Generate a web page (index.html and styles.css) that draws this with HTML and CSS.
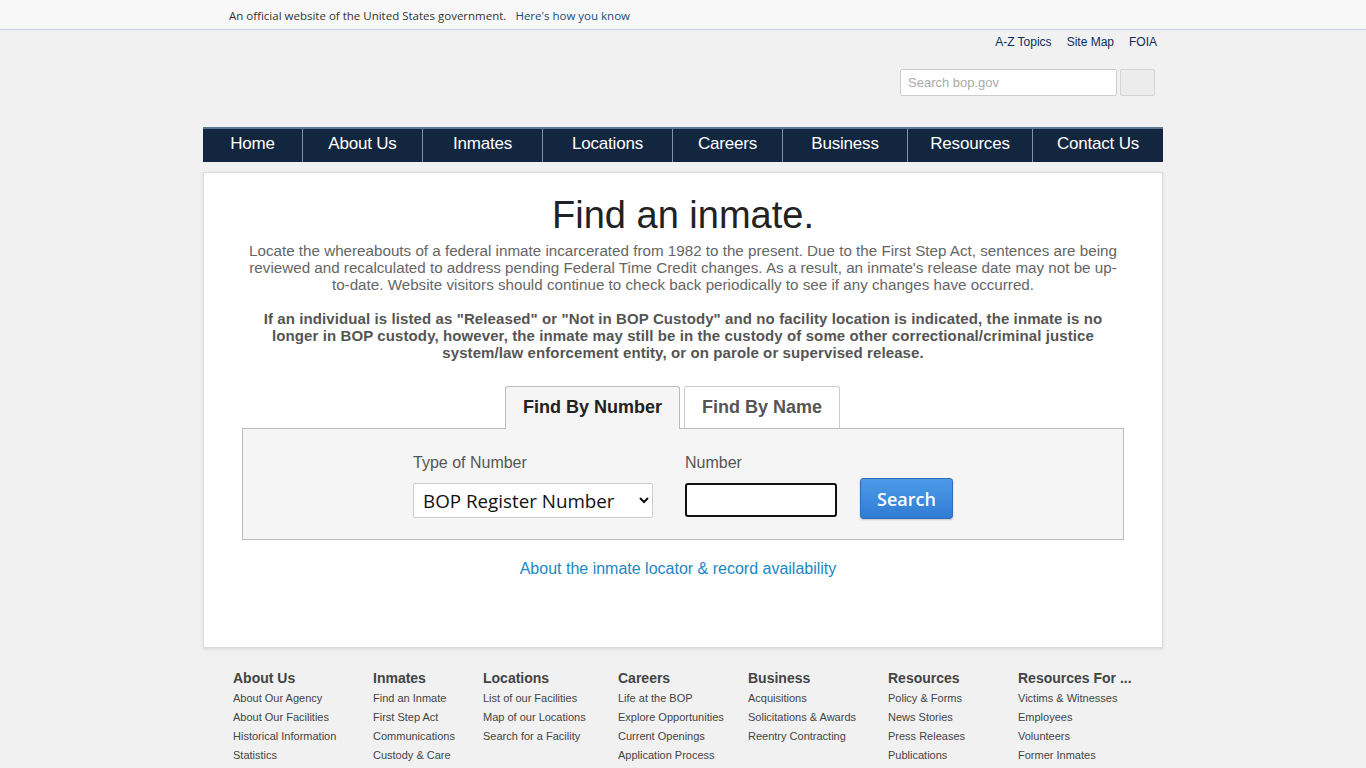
FILE: index.html
```html
<!DOCTYPE html>
<html lang="en">
<head>
    <meta charset="UTF-8">
    <meta name="viewport" content="width=device-width, initial-scale=1.0">
    <title>Find an inmate.</title>
    <link rel="stylesheet" href="styles.css">
</head>
<body>
    <!-- Gov banner -->
    <div class="gov-banner">
        <div class="wrap gov-inner">
            <span>An official website of the United States government.</span>
            <a href="#" class="how">Here's how you know</a>
        </div>
    </div>

    <div class="wrap">
        <div class="header">
            <div class="util-links">
                <a href="#">A-Z Topics</a>
                <a href="#">Site Map</a>
                <a href="#">FOIA</a>
            </div>
            <div class="site-search">
                <input type="text" placeholder="Search bop.gov">
                <button type="button"></button>
            </div>
        </div>

        <ul class="nav">
            <li class="w-home"><a href="#">Home</a></li>
            <li class="w-about"><a href="#">About Us</a></li>
            <li class="w-about"><a href="#">Inmates</a></li>
            <li class="w-loc"><a href="#">Locations</a></li>
            <li class="w-car"><a href="#">Careers</a></li>
            <li class="w-bus"><a href="#">Business</a></li>
            <li class="w-bus"><a href="#">Resources</a></li>
            <li class="w-contact"><a href="#">Contact Us</a></li>
        </ul>

        <div class="card">
            <h1>Find an inmate.</h1>
            <p class="intro">Locate the whereabouts of a federal inmate incarcerated from 1982 to the present. Due to the First Step Act, sentences are being reviewed and recalculated to address pending Federal Time Credit changes. As a result, an inmate's release date may not be up-to-date. Website visitors should continue to check back periodically to see if any changes have occurred.</p>
            <p class="notice">If an individual is listed as "Released" or "Not in BOP Custody" and no facility location is indicated, the inmate is no longer in BOP custody, however, the inmate may still be in the custody of some other correctional/criminal justice system/law enforcement entity, or on parole or supervised release.</p>

            <div class="tabs">
                <div class="tab active">Find By Number</div>
                <div class="tab">Find By Name</div>
            </div>
            <div class="panel">
                <div class="field">
                    <label for="numtype">Type of Number</label>
                    <select id="numtype">
                        <option>BOP Register Number</option>
                    </select>
                </div>
                <div class="field">
                    <label for="num">Number</label>
                    <input type="text" id="num" class="num-input">
                </div>
                <button type="button" class="search-btn">Search</button>
            </div>

            <a href="#" class="about-link">About the inmate locator &amp; record availability</a>
        </div>

        <div class="footer">
            <div class="fcol c1">
                <h4>About Us</h4>
                <a href="#">About Our Agency</a>
                <a href="#">About Our Facilities</a>
                <a href="#">Historical Information</a>
                <a href="#">Statistics</a>
            </div>
            <div class="fcol c2">
                <h4>Inmates</h4>
                <a href="#">Find an Inmate</a>
                <a href="#">First Step Act</a>
                <a href="#">Communications</a>
                <a href="#">Custody &amp; Care</a>
            </div>
            <div class="fcol c3">
                <h4>Locations</h4>
                <a href="#">List of our Facilities</a>
                <a href="#">Map of our Locations</a>
                <a href="#">Search for a Facility</a>
            </div>
            <div class="fcol c4">
                <h4>Careers</h4>
                <a href="#">Life at the BOP</a>
                <a href="#">Explore Opportunities</a>
                <a href="#">Current Openings</a>
                <a href="#">Application Process</a>
            </div>
            <div class="fcol c5">
                <h4>Business</h4>
                <a href="#">Acquisitions</a>
                <a href="#">Solicitations &amp; Awards</a>
                <a href="#">Reentry Contracting</a>
            </div>
            <div class="fcol c6">
                <h4>Resources</h4>
                <a href="#">Policy &amp; Forms</a>
                <a href="#">News Stories</a>
                <a href="#">Press Releases</a>
                <a href="#">Publications</a>
            </div>
            <div class="fcol">
                <h4>Resources For ...</h4>
                <a href="#">Victims &amp; Witnesses</a>
                <a href="#">Employees</a>
                <a href="#">Volunteers</a>
                <a href="#">Former Inmates</a>
            </div>
        </div>
    </div>
</body>
</html>
```

FILE: styles.css
```css
body {
    margin: 0;
    background: #f1f1f1;
    font-family: "Liberation Sans", Arial, sans-serif;
    color: #444;
}

a {
    text-decoration: none;
}

.wrap {
    width: 960px;
    margin: 0 auto;
}

/* gov banner */
.gov-banner {
    background: #f8f8f8;
    border-bottom: 1px solid #c8d0de;
    height: 29px;
}

.gov-inner {
    display: flex;
    align-items: center;
    height: 31px;
    padding-left: 26px;
    box-sizing: border-box;
    font-family: "Open Sans", "Noto Sans", sans-serif;
    font-size: 11.5px;
    color: #333;
}

.gov-inner .how {
    color: #1a4a7a;
    margin-left: 9px;
}

/* header */
.header {
    height: 97px;
    display: flex;
    flex-direction: column;
    align-items: flex-end;
}

.util-links {
    display: flex;
    gap: 15px;
    margin-top: 5px;
    margin-right: 6px;
    font-size: 12px;
}

.util-links a {
    color: #0d2b5e;
}

.site-search {
    display: flex;
    gap: 3px;
    margin-top: 20px;
    margin-right: 8px;
}

.site-search input {
    width: 217px;
    height: 27px;
    box-sizing: border-box;
    border: 1px solid #ccc;
    border-radius: 2px;
    padding: 0 7px;
    font-family: "Liberation Sans", Arial, sans-serif;
    font-size: 13px;
    background: #fff;
}

.site-search input::placeholder {
    color: #aaa;
}

.site-search button {
    width: 35px;
    height: 27px;
    border: 1px solid #d4d4d4;
    border-radius: 2px;
    background: #ececec;
}

/* nav */
.nav {
    display: flex;
    list-style: none;
    margin: 0;
    padding: 0;
    height: 35px;
    background: #12263f;
    border-top: 2px solid #5a7896;
    box-sizing: border-box;
}

.nav li {
    border-right: 1px solid #7f94aa;
    display: flex;
    align-items: center;
    justify-content: center;
}

.nav li:last-child {
    border-right: none;
    flex: 1;
}

.nav a {
    color: #fff;
    font-size: 17px;
    letter-spacing: -0.2px;
    padding-bottom: 3px;
}

.w-home { width: 99px; }
.w-about { width: 119px; }
.w-loc { width: 129px; }
.w-car { width: 109px; }
.w-bus { width: 124px; }

/* card */
.card {
    margin-top: 10px;
    background: #fff;
    border: 1px solid #dcdcdc;
    box-shadow: 0 1px 3px rgba(0, 0, 0, 0.12);
    padding: 20px 40px 60px;
    height: 476px;
    box-sizing: border-box;
    text-align: center;
}

h1 {
    margin: 0;
    font-size: 38px;
    font-weight: normal;
    color: #222;
    line-height: 44px;
}

.intro {
    margin: 5px 0 0;
    font-size: 15.2px;
    line-height: 17px;
    color: #666;
}

.notice {
    margin: 17px 0 0;
    font-size: 15px;
    line-height: 17px;
    font-weight: bold;
    letter-spacing: 0.1px;
    color: #555;
}

.tabs {
    display: flex;
    justify-content: center;
    gap: 4px;
    margin-top: 25px;
    padding-right: 21px;
}

.tab {
    height: 41px;
    padding: 0 17px;
    border: 1px solid #ccc;
    border-bottom: none;
    border-radius: 3px 3px 0 0;
    background: #fff;
    font-size: 18px;
    font-weight: bold;
    color: #555;
    line-height: 40px;
    position: relative;
    z-index: 1;
}

.tab.active {
    background: #f5f5f5;
    color: #222;
    border-color: #bbb;
    height: 42px;
    margin-bottom: -1px;
}

.panel {
    margin: 0 -2px;
    height: 112px;
    box-sizing: border-box;
    background: #f5f5f5;
    border: 1px solid #bbb;
    display: flex;
    align-items: flex-end;
    justify-content: center;
    gap: 32px;
    padding: 0 0 21px 0;
    text-align: left;
}

.field {
    display: flex;
    flex-direction: column;
}

.field label {
    font-size: 16px;
    color: #555;
    margin-bottom: 11px;
}

.field select {
    width: 240px;
    height: 35px;
    border: 1px solid #ccc;
    border-radius: 2px;
    background: #fff;
    font-family: "Open Sans", "Noto Sans", sans-serif;
    font-size: 18.8px;
    color: #111;
    padding: 0 5px;
}

.num-input {
    width: 152px;
    height: 34px;
    box-sizing: border-box;
    border: 2px solid #111;
    border-radius: 3px;
    background: #fff;
    margin-bottom: 1px;
}

.search-btn {
    width: 93px;
    height: 41px;
    margin-left: -9px;
    margin-bottom: -1px;
    border: 1px solid #2d6db5;
    border-radius: 3px;
    background: linear-gradient(#4c9be8, #2f7cd4);
    box-shadow: 0 1px 2px rgba(0, 0, 0, 0.2);
    color: #fff;
    font-family: "Open Sans", "Noto Sans", sans-serif;
    font-size: 18px;
    font-weight: 600;
}

.about-link {
    display: inline-block;
    margin-top: 20px;
    margin-right: 10px;
    font-size: 16px;
    color: #1a88c4;
}

/* footer */
.footer {
    display: flex;
    padding: 22px 0 0 30px;
}

.fcol {
    display: flex;
    flex-direction: column;
}

.c1 { width: 140px; }
.c2 { width: 110px; }
.c3 { width: 135px; }
.c4 { width: 130px; }
.c5 { width: 140px; }
.c6 { width: 130px; }

.fcol h4 {
    margin: 0 0 3px;
    font-size: 14px;
    color: #444;
    line-height: 16px;
}

.fcol a {
    font-size: 11px;
    color: #444;
    line-height: 19px;
}
```
